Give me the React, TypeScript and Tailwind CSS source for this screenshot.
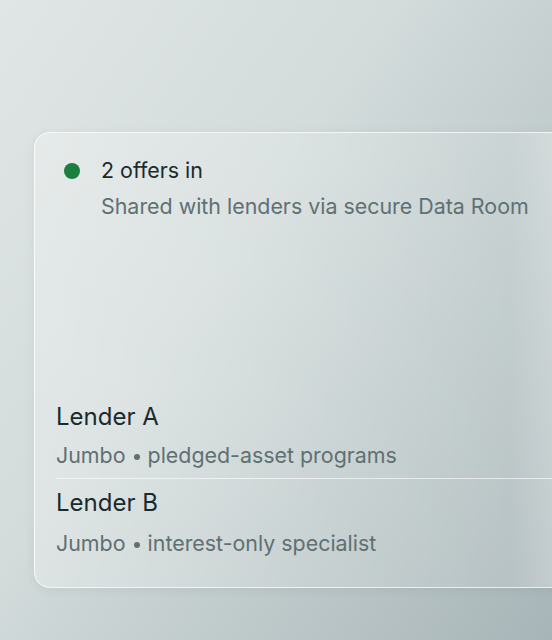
const Dot = () => (
  <span className="mx-[2px] inline-block h-[6px] w-[6px] rounded-full bg-current align-[3px]" />
);

export default function App() {
  return (
    <div
      className="h-[640px] w-[552px] overflow-hidden bg-[linear-gradient(125deg,#e0e6e5_0%,#d3dbdb_40%,#b9c5c6_75%,#a8b5b8_100%)] pl-[34px] pt-[132px]"
      style={{ fontFamily: "Inter, 'Liberation Sans', sans-serif" }}
    >
      <div className="flex h-[456px] w-[560px] flex-col justify-between rounded-2xl border border-white/70 bg-[linear-gradient(90deg,rgba(255,255,255,0.28)_0%,rgba(255,255,255,0.12)_85%,rgba(255,255,255,0.45)_100%)] shadow-[0_2px_10px_rgba(60,80,85,0.08)]">
        <div className="flex gap-[21px] pl-[29px] pt-[23px]">
          <span className="mt-[7px] h-4 w-4 shrink-0 rounded-full bg-[#1a7f3e]" />
          <div>
            <div className="text-[21.4px] leading-7 text-[#1b2a2c]">2 offers in</div>
            <div className="mt-2 text-[21.4px] leading-7 text-[#5f7073]">
              Shared with lenders via secure Data Room
            </div>
          </div>
        </div>

        <div className="pb-[30px]">
          <div className="pb-[9px] pl-[21px]">
            <div className="text-[24px] leading-[30px] text-[#1b2a2c]">Lender A</div>
            <div className="mt-[9px] h-7 text-[21.4px] leading-7 text-[#5f7073]">
              Jumbo <Dot /> pledged-asset programs
            </div>
          </div>
          <div className="ml-[21px] border-t border-white/60 pt-[9px]">
            <div className="text-[24px] leading-[30px] text-[#1b2a2c]">Lender B</div>
            <div className="mt-[11px] h-7 text-[21.4px] leading-7 text-[#5f7073]">
              Jumbo <Dot /> interest-only specialist
            </div>
          </div>
        </div>
      </div>
    </div>
  );
}
